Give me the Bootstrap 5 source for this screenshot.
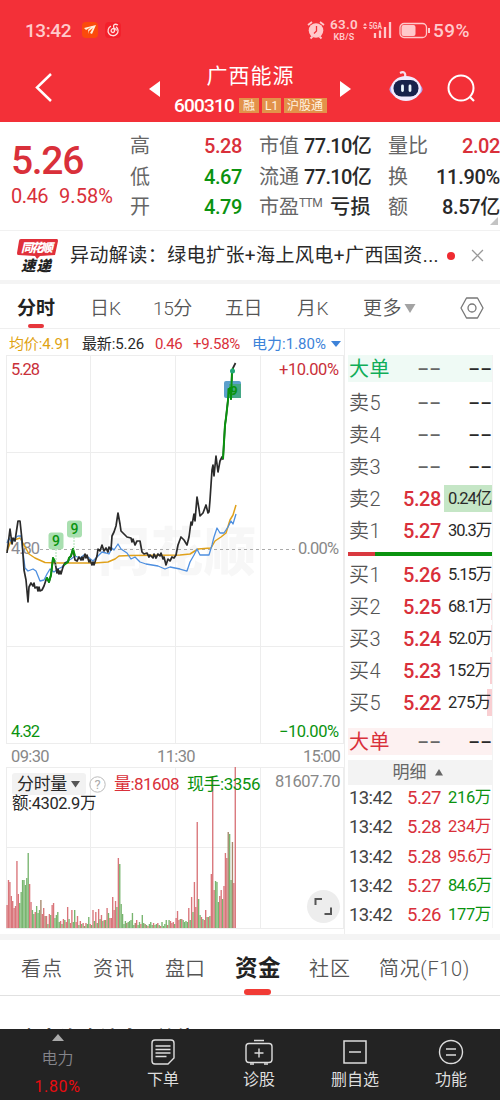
<!DOCTYPE html>
<html lang="zh-CN">
<head>
<meta charset="utf-8">
<meta name="viewport" content="width=device-width, initial-scale=1">
<title>广西能源 600310</title>
<link href="https://cdn.jsdelivr.net/npm/bootstrap@5.3.0/dist/css/bootstrap.min.css" rel="stylesheet">
<style>
:root{--up:#d9303a;--down:#0a930f;--ink:#292929;--mute:#666;--line:#ededed}
body{font-family:Roboto,"Noto Sans CJK SC",sans-serif;line-height:1;color:var(--ink);background:#fff;width:500px;height:1100px;overflow:hidden}
svg{display:block;flex:none}
[data-w]{display:inline-block;white-space:nowrap;flex:none}
.up{color:var(--up)}.down{color:var(--down)}.mute{color:var(--mute)}
.hd{background:#f33038;height:122px;color:#fff}
.status{height:60px;color:#ffc9cb;padding-left:25px}
.titlebar{height:62px;padding-left:34px}
.tagx{background:#e2924a;font-size:12px;height:15px;padding:0 3px;display:flex;align-items:center;color:#fff3e0}
.quote{height:108px}
.qleft{width:130px;padding:20px 0 0 11px}
.qcols{display:grid;grid-template-columns:repeat(3,112px);column-gap:17px;padding-top:9px;align-content:start}
.qcell{height:30.5px;display:flex;align-items:center;justify-content:space-between;font-size:20px}
.qcell .mute{font-weight:400}
.qcell b{font-weight:500}
.corner{right:2px;bottom:5px;border-left:8px solid transparent;border-bottom:8px solid #c4c4c4}
.newsbar{height:50px;border-top:1px solid #f1f1f1;padding-left:17px;font-size:19px}
.band{background:#f4f4f4;flex:none}
.ptabs{height:45px;border-bottom:1px solid #efefef;font-size:19px;padding:5px 0 0 17px;font-weight:350;color:#555}
.ptabs .on,.ltabs .on{font-weight:700;color:#222}
.on i{position:absolute;background:#e6363c;border-radius:3px}
.ptabs .on i{width:16px;height:4px;left:11px;top:25px}
.ltabs .on i{width:27px;height:6px;left:9px;top:32px;background:#f13b35}
.info{height:26px;padding:4px 0 0 9px;font-size:15px}
.axis{height:22px;padding:4px 4px 0 5px;font-size:16.5px;color:#888}
.leftcol{width:345px;padding-left:6px;border-right:1px solid var(--line)}
.book{width:148px;padding:0 0 0 3px;border-right:1px solid #f3f3f3;height:573px;margin-top:26px}
.bk{height:32.1px;display:grid;grid-template-columns:55px 38px 51px;align-items:center;position:relative;font-size:20px}
.bk>*{justify-self:end}.bk>:first-child{justify-self:start;margin-left:1px;font-weight:350;color:#555}
.bk .px{font-size:20px;font-weight:500}
.bk .qty{font-size:16.5px;padding-right:1px;z-index:1}
.bk.big{height:27px}
.bk.big>:first-child{font-weight:400}
.bk.sell>:first-child{color:#10ad58}.bk.buy>:first-child{color:var(--up)}
.dash{display:inline-block;white-space:nowrap;transform:scaleX(1.7);transform-origin:right;font-size:22px;letter-spacing:1px;margin-right:-1px}
.depth{position:absolute;right:0;height:27px;top:2px}
.tick{height:29.4px;display:grid;grid-template-columns:55px 38px 51px;align-items:center;font-size:18.5px}
.tick>*{justify-self:end}.tick>:first-child{justify-self:start;margin-left:1px;color:#444}
.tick .amt{font-size:16.5px;margin-right:1px}
.volhead{left:6px;top:7px;font-size:17px;width:330px}
.pick{background:#f2f2f2;border-radius:3px;height:22px;width:74px;padding-left:5px}
.expander{right:4px;bottom:6px;width:33px;height:33px;background:#ededed}
.ltabs{height:56px;border-bottom:1px solid #e1e1e1;font-size:20px;padding:2px 0 0 21px;font-weight:350;color:#555}
.peek{height:33px;overflow:hidden;padding:33px 0 0 20px;font-size:20px;font-weight:700}
.dock{background:#232323;height:71px;color:#dedede;font-size:16px}
.dock a{width:96px;color:inherit;text-decoration:none}
.dock a:first-child{width:115px}
.navt{margin-top:7px}
</style>
</head>
<body>
<header class="hd">
  <div class="status d-flex align-items-center">
    <span data-w="46" style="font-size:19px;font-weight:500">13:42</span>
    <svg style="margin-left:10px" width="40" height="18" viewBox="0 0 40 18"><rect x="1" y="1" width="16" height="16" rx="4" fill="#fb4a0c"/><path d="M3 7 15 4 11 13 9 12 12 7 8 10 8 13 7 9 10 6 5 9z" fill="#fff0dc"/><rect x="24" y="1" width="16" height="16" rx="4" fill="#f3202b"/><path d="M30 5.200a5 5 0 1 0 5 .5M37 4c-4-2-5 .5-4.200 2.500l.7 3a1.700 1.700 0 1 1-3-.8c.7-1.700 4.500-2 5 1" fill="none" stroke="#ffdede" stroke-width="1.300"/></svg>
    <svg style="margin-left:186px" width="18" height="20" viewBox="0 0 18 20"><circle cx="9" cy="10.500" r="7.300" fill="#ffc9cb"/><path d="M1 5l4-3M17 5l-4-3M3.500 18.500l2-2M14.500 18.500l-2-2" stroke="#ffc9cb" stroke-width="1.800"/><path d="M9.500 6v5l-2.500 2.500" fill="none" stroke="#f33038" stroke-width="1.300"/></svg>
    <span class="d-flex flex-column align-items-center" style="margin-left:5px;gap:1px"><span data-w="28" style="font-size:13.5px;font-weight:600">63.0</span><span data-w="21" style="font-size:9px;font-weight:600">KB/S</span></span>
    <svg style="margin-left:5px" width="29" height="18" viewBox="0 0 29 18"><path d="M0 4.500 2 2l2 2.500zM0 6l2 2.500L4 6z" fill="#ffc9cb"/><path d="M12 12v5M17 9.500V17M22 6v11M27 1v16" stroke="#ffc9cb" stroke-width="2.300"/><text x="6" y="7.500" font-size="8.500" font-weight="700" fill="#ffc9cb" textLength="13" lengthAdjust="spacingAndGlyphs">5GA</text></svg>
    <svg style="margin-left:7px" width="32" height="17" viewBox="0 0 32 17"><rect x="1" y="1.500" width="26.500" height="14" rx="4" fill="none" stroke="#ffc9cb" stroke-width="1.300"/><rect x="2.500" y="3" width="14" height="11" rx="2" fill="#ffc9cb"/><path d="M30 6v5" stroke="#ffc9cb" stroke-width="2"/></svg>
    <span data-w="37" style="margin-left:2px;font-size:19px;font-weight:500">59%</span>
  </div>
  <div class="titlebar d-flex">
    <svg style="margin-top:12px" width="20" height="32" viewBox="0 0 20 32"><path d="M17 2 3 15.500 17 29" fill="none" stroke="#fff" stroke-width="2.500"/></svg>
    <svg style="margin:20px 0 0 94px" width="13" height="18" viewBox="0 0 13 18"><path d="M12 1v16L1 9z" fill="#fff"/></svg>
    <div class="d-flex flex-column align-items-center" style="width:179px;padding-top:6px">
      <span data-w="88" style="font-size:21px">广西能源</span>
      <div class="d-flex align-items-center" style="gap:3px;margin-top:9px"><span data-w="60" style="font-size:19px;font-weight:500;margin-right:2px">600310</span><span class="tagx" style="width:20px;padding-left:4px">融</span><span class="tagx" style="width:19px">L1</span><span class="tagx" style="width:43px">沪股通</span></div>
    </div>
    <svg style="margin:20px 0 0 -1px" width="13" height="18" viewBox="0 0 13 18"><path d="M1 1v16l11-8z" fill="#fff"/></svg>
    <svg style="margin:10px 0 0 36px" width="36" height="32" viewBox="0 0 36 32"><path d="M12 3c4-2 6 0 5 4" fill="none" stroke="#f6dcec" stroke-width="2.200"/><ellipse cx="18" cy="19.500" rx="16.500" ry="8" fill="#b3a7ee"/><ellipse cx="18" cy="18.500" rx="15" ry="12.500" fill="#f1ebff"/><rect x="5.500" y="10" width="25" height="16.500" rx="8" fill="#17224c"/><path d="M14.500 16v4.500M22 16v4.500" stroke="#eaf6ff" stroke-width="2.800" stroke-linecap="round"/></svg>
    <svg style="margin:14px 0 0 22px" width="32" height="32" viewBox="0 0 32 32"><circle cx="15" cy="14" r="12.500" fill="none" stroke="#fff" stroke-width="2"/><path d="M23.500 22.500 28 27" stroke="#fff" stroke-width="2.200"/></svg>
  </div>
</header>

<section class="quote d-flex position-relative">
  <div class="qleft up">
    <div data-w="72" style="font-size:39px;font-weight:500">5.26</div>
    <div class="d-flex" style="font-size:20px;margin-top:5px"><span data-w="37" style="margin-right:11px">0.46</span><span data-w="54">9.58%</span></div>
  </div>
  <div class="qcols">
    <div class="qcell"><span class="mute">高</span><b class="up" data-w="38">5.28</b></div>
    <div class="qcell"><span class="mute">市值</span><b data-w="67">77.10亿</b></div>
    <div class="qcell"><span class="mute">量比</span><b class="up" data-w="38">2.02</b></div>
    <div class="qcell"><span class="mute">低</span><b class="down" data-w="38">4.67</b></div>
    <div class="qcell"><span class="mute">流通</span><b data-w="67">77.10亿</b></div>
    <div class="qcell"><span class="mute">换</span><b data-w="64">11.90%</b></div>
    <div class="qcell"><span class="mute">开</span><b class="down" data-w="38">4.79</b></div>
    <div class="qcell"><span class="mute d-flex">市盈<small style="font-size:12px" data-w="23">TTM</small></span><b data-w="41">亏损</b></div>
    <div class="qcell"><span class="mute">额</span><b data-w="58">8.57亿</b></div>
  </div>
  <i class="corner position-absolute"></i>
</section>

<section class="newsbar d-flex align-items-center">
  <svg width="42" height="38" viewBox="0 0 42 38"><path d="M4 2H40Q41 2 41 4L38 18 23 19 20 22 18 19 1 18Q0 18 0 16L2 4Q2 2 4 2z" fill="#e0303a"/><g font-weight="900" font-style="italic" font-family="Noto Sans CJK SC, sans-serif"><text x="4" y="14.500" font-size="12" fill="#fff" textLength="32">同花顺</text><text x="4" y="34" font-size="14.500" fill="#222" textLength="30">速递</text></g></svg>
  <span data-w="369" style="margin-left:11px">异动解读：绿电扩张+海上风电+广西国资...</span>
  <i class="rounded-circle" style="width:8px;height:8px;background:#ef2b31;margin-left:8px"></i>
  <svg style="margin-left:16px" width="13" height="13" viewBox="0 0 12 12"><path d="M1 1 11 11M11 1 1 11" stroke="#999" stroke-width="1.200"/></svg>
</section>
<div class="band" style="height:4px"></div>

<nav class="ptabs d-flex align-items-center">
  <span class="on position-relative" data-w="38">分时<i></i></span>
  <span data-w="31" style="margin-left:35px">日K</span>
  <span data-w="39" style="margin-left:32px">15分</span>
  <span data-w="37" style="margin-left:33px">五日</span>
  <span data-w="32" style="margin-left:35px">月K</span>
  <span data-w="39" style="margin-left:34px">更多</span>
  <svg style="margin-left:2px" width="12" height="10" viewBox="0 0 12 10"><path d="M.5 0h11L6 9z" fill="#a3a3a3"/></svg>
  <svg style="margin-left:44px;margin-top:-2px" width="24" height="24" viewBox="0 0 24 24" fill="none" stroke="#777" stroke-width="1.300"><path d="M6.500 2h11L23 12l-5.500 10h-11L1 12z" stroke-linejoin="round"/><circle cx="12" cy="12" r="4"/></svg>
</nav>

<main class="d-flex" style="height:605px">
  <div class="leftcol">
    <div class="info d-flex align-items-center" style="margin-left:-6px;width:345px">
      <span data-w="62" style="color:#dfa313">均价:4.91</span><span data-w="62" style="margin-left:11px">最新:5.26</span><span class="up" data-w="27" style="margin-left:11px">0.46</span><span class="up" data-w="47" style="margin-left:11px">+9.58%</span><span data-w="74" style="margin-left:12px;color:#3d83d9">电力:1.80%</span><svg style="margin-left:5px" width="10" height="8" viewBox="0 0 10 8"><path d="M0 1h10L5 7z" fill="#3d83d9"/></svg>
    </div>
    <svg id="price" width="338" height="389" viewBox="6 355 338 389"></svg>
    <div class="axis d-flex align-items-center"><span data-w="38">09:30</span><span data-w="38" style="margin-left:108px">11:30</span><span data-w="37" style="margin-left:auto">15:00</span></div>
    <div class="position-relative">
      <svg id="vol" width="338" height="163" viewBox="6 766 338 163"></svg>
      <div class="volhead position-absolute">
        <div class="d-flex align-items-center">
          <span class="pick d-flex align-items-center"><span data-w="50">分时量</span><svg style="margin-left:4px" width="9" height="7" viewBox="0 0 9 7"><path d="M0 0H9L4.500 6.500z" fill="#555"/></svg></span>
          <svg style="margin-left:3px" width="17" height="17" viewBox="0 0 17 17"><circle cx="8.500" cy="8.500" r="7.700" fill="none" stroke="#bbb"/><text x="8.500" y="13" text-anchor="middle" font-size="13" fill="#aaa">?</text></svg>
          <span class="up" data-w="65" style="margin-left:8px">量:81608</span><span class="down" data-w="73" style="margin-left:8px">现手:3356</span><span data-w="65" style="margin-left:15px;font-size:16.5px;color:#888;margin-top:-3px">81607.70</span>
        </div>
        <div data-w="84" style="font-size:16.5px;margin-top:-1px">额:4302.9万</div>
      </div>
      <span class="expander position-absolute rounded-circle d-flex align-items-center justify-content-center"><svg width="19" height="19" viewBox="0 0 19 19"><path d="M1.500 8V2H8M17 10.500V17H10.500" fill="none" stroke="#555" stroke-width="2"/></svg></span>
    </div>
  </div>
  <aside class="book" id="book"></aside>
</main>
<div class="band" style="height:6px"></div>

<nav class="ltabs d-flex align-items-center">
  <span data-w="42">看点</span>
  <span data-w="42" style="margin-left:30px">资讯</span>
  <span data-w="40" style="margin-left:30px">盘口</span>
  <span class="on position-relative" data-w="46" style="margin-left:30px;font-size:22.5px"><i></i>资金</span>
  <span data-w="42" style="margin-left:28px">社区</span>
  <span data-w="91" style="margin-left:28px">简况(F10)</span>
</nav>
<div class="peek">主力资金流向 &nbsp; 单位</div>

<footer class="dock d-flex">
  <a href="#" class="d-flex flex-column align-items-center"><svg style="margin-top:5px" width="12" height="8" viewBox="0 0 12 8"><path d="M6 0 12 7H0z" fill="#aaa"/></svg><span style="color:#85858a;margin-top:9px;font-weight:350">电力</span><span style="color:#e90c10;margin-top:12px" data-w="46">1.80%</span></a>
  <a href="#" class="d-flex flex-column align-items-center"><svg style="margin-top:10px" width="24" height="26" viewBox="0 0 24 26" fill="none" stroke="#ddd" stroke-width="1.400"><path d="M4 1H20q3 0 3 3V19l-6 6H4q-3 0-3-3V4q0-3 3-3zM4.500 7h15M4.500 10.500h15M4.500 14h15M4.500 17.500h11"/></svg><span class="navt">下单</span></a>
  <a href="#" class="d-flex flex-column align-items-center"><svg style="margin-top:10px" width="28" height="26" viewBox="0 0 28 26" fill="none" stroke="#ddd" stroke-width="1.400"><rect x="1" y="4.500" width="26" height="19" rx="3"/><path d="M9 1.500h10M14 9.500v9M9.500 14h9M5 25h4M19 25h4"/></svg><span class="navt">诊股</span></a>
  <a href="#" class="d-flex flex-column align-items-center"><svg style="margin-top:10px" width="24" height="26" viewBox="0 0 24 26" fill="none" stroke="#ddd" stroke-width="1.500"><path d="M1 2H23V24H1zM6 13h12"/></svg><span class="navt">删自选</span></a>
  <a href="#" class="d-flex flex-column align-items-center"><svg style="margin-top:10px" width="26" height="26" viewBox="0 0 26 26" fill="none" stroke="#ddd" stroke-width="1.400"><circle cx="13" cy="13" r="11.500"/><path d="M8 10h10M8 16h10"/></svg><span class="navt">功能</span></a>
</footer>

<script src="https://cdn.jsdelivr.net/npm/bootstrap@5.3.0/dist/js/bootstrap.bundle.min.js"></script>
<script>
/* intraday price chart */
const line = (pts, color, w) => `<polyline points="${pts}" fill="none" stroke="${color}" stroke-width="${w}" stroke-linejoin="round"/>`;
const gridV = (a, b) => [6.5, 90.5, 175.5, 260.5, 343.5].map(x => `<path d="M${x} ${a}V${b}" stroke="#ededed"/>`).join('');
const gridH = ys => ys.map(y => `<path d="M6 ${y}H344" stroke="#ededed"/>`).join('');
const price = '7,553 10,529 12,544 13,538 15,541 18,521 20,521 22,540 24,570 26,580 28,602 29,587 31,583 33,586 34,583 35,588 37,587 38,591 39,587 40,591 42,590 44,586 46,580 47,578 49,582 51,575 53,558 55,562 57,573 58,569 59,574 60,571 61,574 63,567 65,563 68,562 69,558 71,556 73,549 75,560 77,561 79,557 81,560 82,557 83,560 85,554 86,558 87,555 89,562 90,560 92,565 93,562 94,565 97,556 98,549 100,551 102,545 104,551 106,548 108,552 109,547 111,550 112,536 114,532 116,526 118,513 120,524 121,531 124,534 127,537 131,538 132,542 133,539 135,545 137,541 140,541 142,552 144,554 147,553 149,557 150,555 153,558 154,554 156,558 158,554 160,556 161,553 163,559 164,557 166,565 168,559 170,561 172,557 174,558 176,555 178,545 181,537 184,540 187,545 189,537 191,522 192,525 194,514 195,521 197,497 199,509 200,516 203,513 206,505 208,513 209,512 210,500 212,470 213,465 214,476 216,456 218,472 220,461 222,457 223,459 225,425 226,418 228,400 229,389 231,399 232,372 233,368 235.5,363';
const avg = '7,551 11,541 20,538 24,545 29,554 35,558 45,562.500 60,563 95,563 108,562 115,559 119,556 130,555.500 180,555 190,554 198,549 211,548 215,541 221,537 226,533 230,520 233,515 236,505';
const sector = '7,543 9,538 12,543 15,538 18,536 21,536 23,552 25,568 28,571 33,569 36,571 40,581 44,580 47,574 50,569 54,572 58,569 62,567 66,562 71,559 75,556 80,558 84,555 88,557 93,561 97,557 102,552 106,553 109,554 112,548 114,550 118,544 121,549 127,553 131,559 135,557 140,562 146,564 152,565 158,566 165,569 170,567 175,568 180,569 187,571 190,562 194,555 197,549 200,555 209,555 212,545 214,537 217,528 220,533 224,533 228,527 231,521 233,524 236,514';
const label = (x, y, w, t, c) => `<text x="${x}" y="${y}" font-size="16.5" fill="${c}" textLength="${w}">${t}</text>`;
const flag = (x, y) => `<rect x="${x - 7}" y="${y - 8.5}" width="15" height="17" rx="3" fill="#a9dfb0"/><text x="${x + .5}" y="${y + 5}" text-anchor="middle" font-size="14" font-weight="500" fill="#0a930f">9</text>`;
document.getElementById('price').innerHTML =
  `<text x="98" y="571" font-size="52" font-weight="900" fill="#f7f7f7" textLength="158">同花顺</text>` +
  gridV(355, 744) + gridH([355.5, 452.5, 646.5, 743.5]) +
  `<path d="M40 549.5H297" stroke="#aaa" stroke-dasharray="3 3"/>` +
  label(11, 554, 29, '4.80', '#8b8b93') +
  line(avg, '#e0a11a', 1.5) + line(sector, '#4d8fe0', 1.3) + line(price, '#2b2b2b', 1.7) +
  line('46,580 47,578 49,582 51,575 53,558 55,562', '#0a930f', 2) +
  line('64,565 68,562 69,558 71,556 73,549 75,556', '#0a930f', 2) +
  `<path d="M56 549v18M74 537v13" stroke="#a9dfb0" stroke-dasharray="2 1"/>` + flag(55.5, 541) + flag(74, 529) +
  `<rect x="224" y="381" width="17" height="17" rx="2" fill="#5ca0cc"/><rect x="229" y="384" width="12" height="14" fill="#45a785"/><text x="234" y="395" text-anchor="middle" font-size="13" font-weight="700" fill="#0a930f">9</text>` +
  line('223,459 225,425 226,418 228,400 228.500,389 229,393 230,388 231,399 232,372 233,368', '#0a930f', 2) +
  `<circle cx="232.500" cy="371" r="2.500" fill="#22a578"/>` +
  label(11, 375, 29, '5.28', '#c9303a') + label(279, 375, 60, '+10.00%', '#c9303a') +
  label(298, 554, 41, '0.00%', '#888') +
  label(11, 737, 29, '4.32', '#0a930f') + label(279, 737, 60, '−10.00%', '#0a930f');

/* volume bars: height in px, letter = direction */
const vols = '23r 48r 46r 32r 27r 20r 22r 67r 34r 25g 36g 48g 48g 43g 50g 75g 44r 26r 18g 14g 16r 22g 15g 18g 28n 14r 20r 12n 12r 4g 14r 13g 23r 25r 10g 13g 16g 6g 7r 4g 9r 8g 6r 21r 9g 5r 18r 6g 18g 6r 12r 3g 7r 4g 5r 2g 5r 4g 11g 4r 3g 18r 7g 16r 5g 19r 9g 13r 7g 8r 8g 20r 15g 10r 10r 31r 18r 27r 21g 70r 64g 24g 14g 4g 7g 5n 6g 7g 8g 15g 3g 5n 8r 3g 6g 4r 13g 5g 4n 3g 2r 4g 6g 3g 5r 3g 4g 5r 3g 2r 6g 2g 4g 8g 3r 8g 7r 5r 6r 4g 10r 17r 8r 9g 9r 8g 6g 7g 6g 20r 8g 31r 16g 46r 21r 106r 29g 13g 11r 9g 8r 18r 11g 11r 12g 54r 152r 38r 47g 46g 26g 32r 38r 29g 42r 75r 70r 96n 94g 48g 86n 45r 161r'.split(' ');
const tone = {r: '#d9757a', g: '#78b56f', n: '#a6886c'};
const step = 229.6 / vols.length;
document.getElementById('vol').innerHTML = gridV(767, 928) + gridH([767.5, 847.5, 928.5]) +
  vols.map((v, i) => { const h = parseInt(v); return `<rect x="${(6.4 + i * step).toFixed(2)}" y="${928 - h}" width="${(step - .05).toFixed(2)}" height="${h}" fill="${tone[v.slice(-1)]}"/>`; }).join('');

/* order book and trade ticks */
const D = '<span class="dash">--</span>';
const row = (n, p, q, depth = '') => `<div class="bk"><span data-w="32">${n}</span>${p ? `<span class="px up" data-w="38">${p}</span><span class="qty" data-w="43">${q}</span>` : `<span class="mute">${D}</span>${D}`}${depth}</div>`;
const dep = (w, c) => `<i class="depth" style="width:${w}px;background:${c}"></i>`;
document.getElementById('book').innerHTML =
  `<div class="bk big sell" style="background:#effaf5;margin-bottom:5px"><span data-w="41">大单</span><span class="mute">${D}</span>${D}</div>` +
  row('卖5') + row('卖4') + row('卖3') + row('卖2', '5.28', '0.24亿', dep(48, '#c5e6c6')) + row('卖1', '5.27', '30.3万') +
  `<div class="d-flex" style="height:4px;margin:5px 0 2.5px"><i style="width:27px;background:#d9393f"></i><i class="flex-fill" style="background:#0a930f"></i></div>` +
  row('买1', '5.26', '5.15万') + row('买2', '5.25', '68.1万', dep(1.5, '#fbdfe1')) + row('买3', '5.24', '52.0万', dep(1, '#fbdfe1')) + row('买4', '5.23', '152万', dep(2.5, '#f9cfd2')) + row('买5', '5.22', '275万', dep(5, '#f9cfd2')) +
  `<div class="bk big buy" style="background:#fdf1f1;margin-top:9px"><span data-w="41">大单</span><span class="mute">${D}</span>${D}</div>` +
  `<div class="d-flex align-items-center justify-content-center mute" style="height:25px;margin-top:5px;margin-bottom:-2px;background:#f3f3f3;font-size:17px;gap:8px;padding-right:5px">明细<svg width="8" height="7" viewBox="0 0 8 7"><path d="M4 0 8 6.500H0z" fill="#666"/></svg></div>` +
  [['5.27', '216万', 'down'], ['5.28', '234万', 'up'], ['5.28', '95.6万', 'up'], ['5.27', '84.6万', 'down'], ['5.26', '177万', 'down']].map(t =>
    `<div class="tick"><span data-w="43">13:42</span><span class="up" data-w="34">${t[0]}</span><span class="amt ${t[2]}" data-w="43">${t[1]}</span></div>`).join('');

document.querySelectorAll('[data-w]').forEach(e => {
  const w = +e.dataset.w, pad = parseFloat(getComputedStyle(e).paddingRight);
  e.style.letterSpacing = ((w - e.getBoundingClientRect().width + pad) / e.textContent.length).toFixed(3) + 'px';
  e.style.width = w + pad + 'px';
});
</script>
</body>
</html>
